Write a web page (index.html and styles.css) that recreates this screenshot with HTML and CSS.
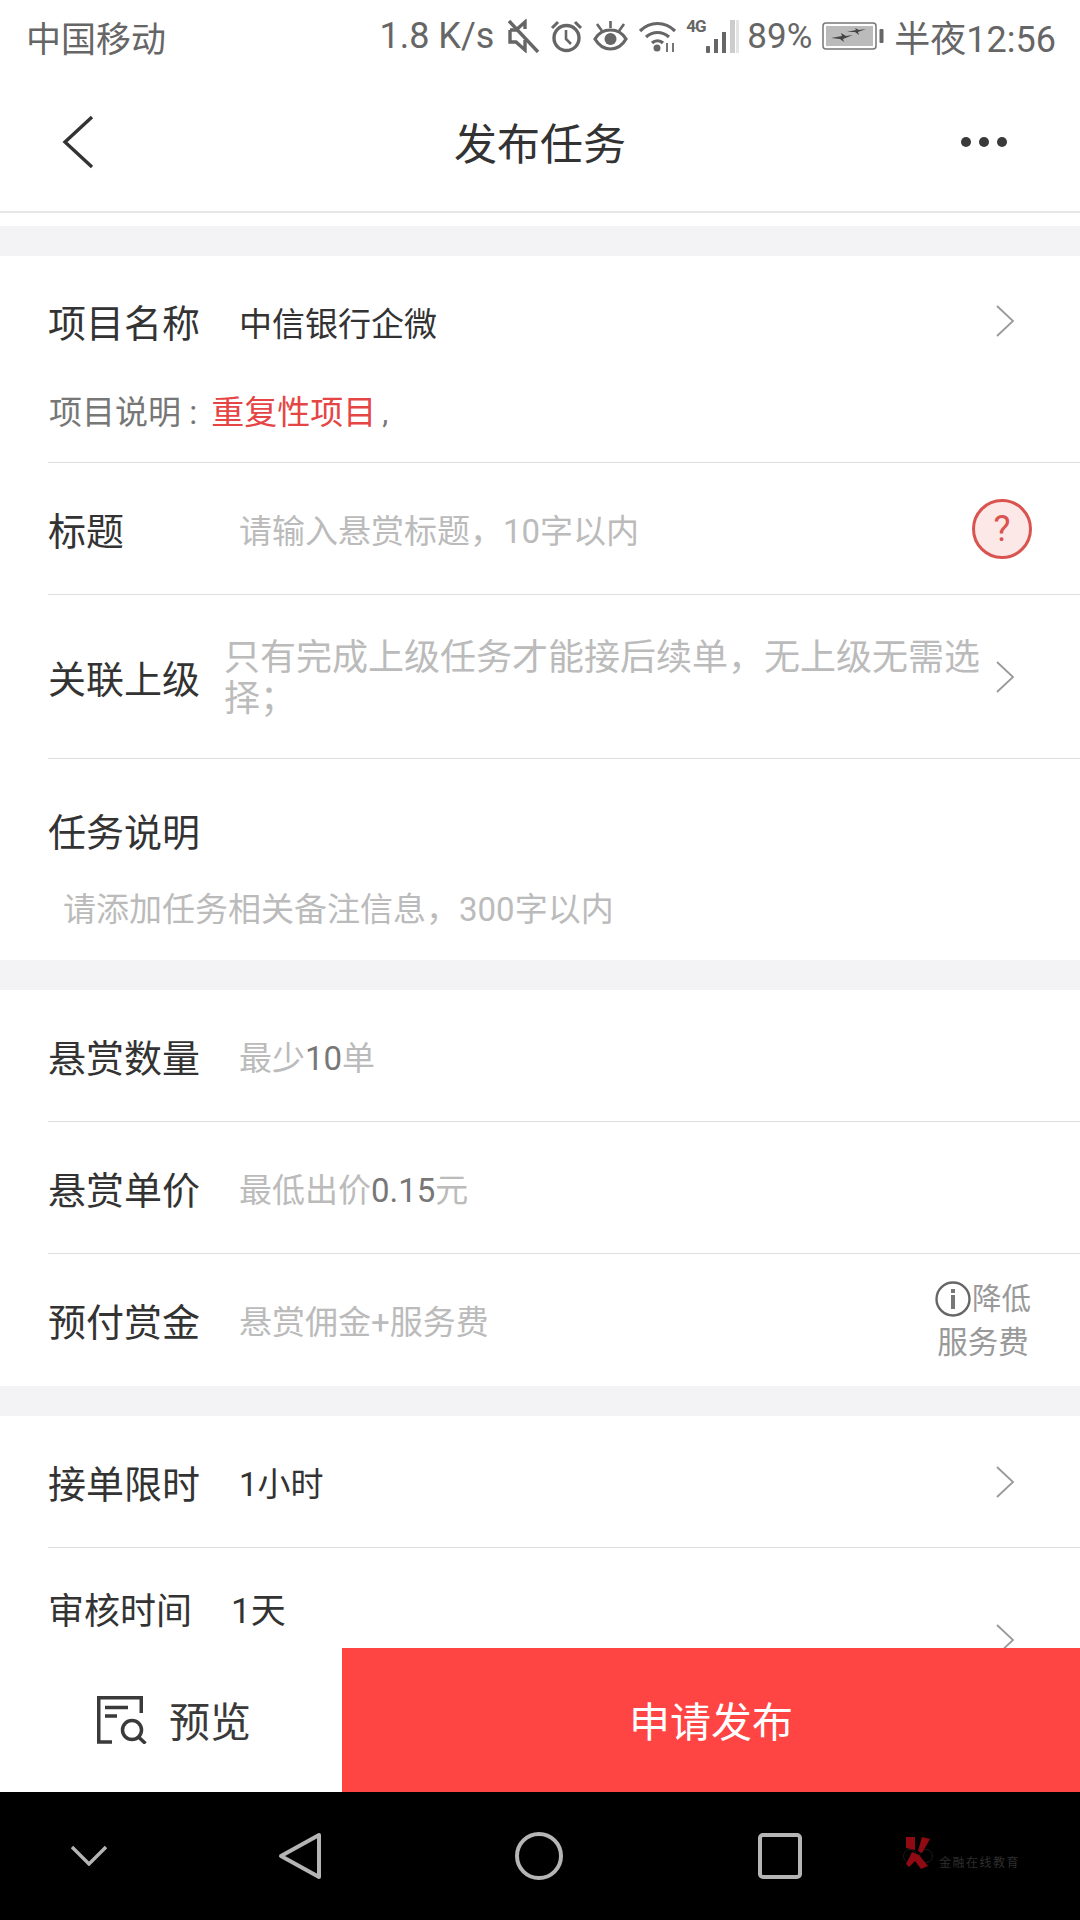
FILE: index.html
```html
<!DOCTYPE html>
<html lang="zh">
<head>
<meta charset="utf-8">
<title>发布任务</title>
<link rel="stylesheet" href="styles.css">
</head>
<body>
<div class="page">
  <div class="status">
    <span class="carrier">中国移动</span>
    <div class="status-right">
      <span class="speed">1.8 K/s</span>
      <svg class="ic-mute" viewBox="0 0 32 34"><path d="M2 11h6l9-8v7M17 21v10l-9-8H2V11" fill="none" stroke="#666" stroke-width="3.4"/><path d="M1 2l29 31" stroke="#666" stroke-width="3.4"/></svg>
      <svg class="ic-alarm" viewBox="0 0 33 33"><circle cx="16.5" cy="18" r="12.5" fill="none" stroke="#666" stroke-width="3.4"/><path d="M16 10v9l5 5" fill="none" stroke="#666" stroke-width="2.6"/><path d="M2 8l6-6M31 8l-6-6" stroke="#666" stroke-width="3"/></svg>
      <svg class="ic-eye" viewBox="0 0 35 30"><path d="M2 18c4-7 9-9 15.500-9S29 11 33 18c-4 7-9 10-15.500 10S6 25 2 18z" fill="none" stroke="#666" stroke-width="3.200"/><circle cx="17.500" cy="18" r="6" fill="#666"/><path d="M17.500 0v7M4 3l5 7M31 3l-5 7" stroke="#666" stroke-width="2.600"/></svg>
      <svg class="ic-wifi" viewBox="0 0 39 32"><path d="M2 11c10-10 25-10 35 0M8 17c7-6 16-6 23 0M14 23c3-3 8-3 11 0" fill="none" stroke="#666" stroke-width="3.200"/><circle cx="19" cy="28" r="3.500" fill="#666"/><path d="M29 23v9M35 23v9" stroke="#666" stroke-width="1.800"/></svg>
      <div class="net">
        <span class="g4">4G</span>
        <svg class="ic-signal" viewBox="0 0 34 33"><rect x="0" y="26" width="4" height="7" rx="1" fill="#666"/><rect x="8" y="19" width="4" height="14" fill="#666"/><rect x="16" y="12" width="4" height="21" fill="#666"/><rect x="24" y="0" width="5" height="33" fill="#ccc"/><rect x="30" y="0" width="3" height="33" fill="#e4e4e4"/></svg>
      </div>
      <span class="batt-pct">89%</span>
      <svg class="ic-batt" viewBox="0 0 62 28"><rect x="1" y="1" width="53" height="26" rx="3" fill="#fff" stroke="#777" stroke-width="1.500"/><rect x="4" y="4" width="47" height="20" fill="#bbb"/><path d="M9 16l11-2-1-3 5 3 7-1-10 4 1 3-4-3zM25 10l9-2-1-2 4 2 7-1-8 3 1 3-4-3z" fill="#444"/><rect x="57.500" y="7" width="4" height="14" rx="1" fill="#666"/></svg>
      <span class="clock">半夜12:56</span>
    </div>
  </div>

  <header class="header">
    <svg class="ic-back" viewBox="0 0 32 54"><path d="M30 2L3 27l27 25" fill="none" stroke="#333" stroke-width="3.400"/></svg>
    <h1 class="title">发布任务</h1>
    <div class="dots"><i></i><i></i><i></i></div>
  </header>

  <main class="content">
    <div class="band band-top"></div>
    <section class="card">
      <div class="row row-project">
        <span class="label">项目名称</span>
        <span class="value value-first">中信银行企微</span>
        <svg class="chev" viewBox="0 0 20 32"><path d="M2 1l16 15L2 31" fill="none" stroke="#999" stroke-width="1.800"/></svg>
      </div>
      <div class="desc"><span class="desc-key">项目说明 :</span><em>重复性项目</em><span class="comma">,</span></div>
      <div class="row line">
        <span class="label">标题</span>
        <span class="ph ph-title">请输入悬赏标题，10字以内</span>
        <span class="help">?</span>
      </div>
      <div class="row line row-rel">
        <span class="label">关联上级</span>
        <span class="ph-rel">只有完成上级任务才能接后续单，无上级无需选择；</span>
        <svg class="chev" viewBox="0 0 20 32"><path d="M2 1l16 15L2 31" fill="none" stroke="#999" stroke-width="1.800"/></svg>
      </div>
      <div class="note line">
        <span class="label">任务说明</span>
        <span class="ph note-ph">请添加任务相关备注信息，300字以内</span>
      </div>
    </section>

    <div class="band"></div>

    <section class="card">
      <div class="row row-first">
        <span class="label">悬赏数量</span>
        <span class="ph">最少<b>10</b>单</span>
      </div>
      <div class="row line">
        <span class="label">悬赏单价</span>
        <span class="ph">最低出价<b>0.15</b>元</span>
      </div>
      <div class="row line row-last">
        <span class="label">预付赏金</span>
        <span class="ph">悬赏佣金+服务费</span>
        <div class="reduce">
          <div class="reduce-top">
            <svg class="ic-info" viewBox="0 0 36 36"><circle cx="18" cy="18" r="16.500" fill="none" stroke="#666" stroke-width="2.400"/><rect x="16" y="14" width="4" height="14" fill="#777"/><rect x="16" y="8" width="4" height="4" fill="#777"/></svg>
            <span>降低</span>
          </div>
          <span>服务费</span>
        </div>
      </div>
    </section>

    <div class="band"></div>

    <section class="card">
      <div class="row row-first">
        <span class="label">接单限时</span>
        <span class="value">1小时</span>
        <svg class="chev" viewBox="0 0 20 32"><path d="M2 1l16 15L2 31" fill="none" stroke="#999" stroke-width="1.800"/></svg>
      </div>
      <div class="row line row-audit">
        <span class="label label-sm">审核时间</span>
        <span class="value value-audit">1天</span>
        <svg class="chev chev-audit" viewBox="0 0 20 32"><path d="M2 1l16 15L2 31" fill="none" stroke="#999" stroke-width="1.800"/></svg>
      </div>
    </section>
  </main>

  <div class="actions">
    <div class="preview">
      <svg class="ic-preview" viewBox="0 0 50 48"><path d="M15 46H1.750V1.750h42.500V17" fill="none" stroke="#3a3a3a" stroke-width="3.500"/><path d="M8 11.500h23M8 20h12" stroke="#3a3a3a" stroke-width="3.500"/><circle cx="35" cy="34" r="9.500" fill="none" stroke="#3a3a3a" stroke-width="3.500"/><path d="M41.500 41l7 6.500" stroke="#3a3a3a" stroke-width="3.500"/></svg>
      <span>预览</span>
    </div>
    <div class="publish">申请发布</div>
  </div>

  <nav class="sysnav">
    <svg class="nav-down" viewBox="0 0 38 21"><path d="M2 2l17 17L36 2" fill="none" stroke="#b5b5b5" stroke-width="3.400"/></svg>
    <svg class="nav-back" viewBox="0 0 44 48"><path d="M41 3v42L3 24z" fill="none" stroke="#b5b5b5" stroke-width="4" stroke-linejoin="round"/></svg>
    <svg class="nav-home" viewBox="0 0 48 48"><circle cx="24" cy="24" r="22" fill="none" stroke="#b5b5b5" stroke-width="4"/></svg>
    <svg class="nav-recent" viewBox="0 0 44 46"><rect x="2" y="2" width="40" height="42" rx="3" fill="none" stroke="#b5b5b5" stroke-width="4"/></svg>
    <div class="mark">
      <svg class="mark-logo" viewBox="0 0 30 32"><circle cx="7" cy="19" r="6.500" fill="none" stroke="#1c1c1c"/><circle cx="23" cy="19" r="6.500" fill="none" stroke="#1c1c1c"/><path d="M3 0h9v13l-9-2zM19 0l8 2-8 14-4-2zM9 15l7 3 9 11-7 3-6-8-6 6-3-3z" fill="#8f0a12"/></svg>
      <span class="mark-text">金融在线教育</span>
    </div>
  </nav>
</div>
</body>
</html>
```
FILE: styles.css
```css
* { box-sizing: border-box; }
html, body { margin: 0; padding: 0; }
body {
  width: 1080px;
  height: 1920px;
  overflow: hidden;
  background: #fff;
  font-family: Roboto, "Noto Sans CJK SC", sans-serif;
  color: #333;
}
.page { width: 1080px; height: 1920px; display: flex; flex-direction: column; }
svg { display: block; flex: none; }

/* status bar */
.status {
  height: 76px;
  flex: none;
  display: flex;
  align-items: center;
  justify-content: space-between;
  padding: 0 24px 4px 26px;
  color: #666;
  font-size: 36px;
  white-space: nowrap;
}
.carrier { font-size: 35px; }
.status-right { display: flex; align-items: center; gap: 10px; }
.speed { margin-right: 4px; }
.ic-mute { width: 32px; height: 34px; }
.ic-alarm { width: 33px; height: 33px; }
.ic-eye { width: 35px; height: 30px; }
.ic-wifi { width: 39px; height: 32px; }
.net { position: relative; width: 54px; height: 33px; margin-left: -1px; margin-right: -3px; }
.g4 { position: absolute; left: 0; top: -2px; font-size: 17px; font-weight: 700; letter-spacing: -1px; line-height: 16px; }
.ic-signal { position: absolute; right: 0; top: 0; width: 34px; height: 33px; }
.ic-batt { width: 62px; height: 28px; }
.batt-pct { font-size: 35px; }

/* header */
.header {
  height: 137px;
  flex: none;
  display: flex;
  align-items: center;
  justify-content: space-between;
  padding: 0 73px 4px 62px;
  border-bottom: 2px solid #e6e6e6;
  position: relative;
}
.ic-back { width: 32px; height: 54px; }
.title {
  position: absolute;
  left: 0;
  right: 0;
  top: 41px;
  margin: 0;
  text-align: center;
  font-size: 43px;
  font-weight: 400;
  line-height: 56px;
  color: #333;
}
.dots { display: flex; gap: 8px; }
.dots i { width: 10px; height: 10px; border-radius: 50%; background: #3a3a3a; }

/* content */
.content { flex: 1; min-height: 0; overflow: hidden; padding-top: 13px; }
.band { height: 30px; background: #f3f3f5; }
.card { background: #fff; }
.row {
  height: 132px;
  display: flex;
  align-items: center;
  margin-left: 48px;
  padding-right: 65px;
  position: relative;
}
.row-first { height: 131px; }
.row-last { height: 133px; }
.line { border-top: 1px solid #dedede; }
.label { width: 191px; flex: none; font-size: 38px; color: #333; line-height: 50px; white-space: nowrap; margin-top: 6px; }
.value { flex: 1; font-size: 33px; color: #333; }
.value-first { margin-top: 2px; }
.ph { flex: 1; font-size: 33px; color: #bbb; white-space: nowrap; }
.ph b { font-weight: 400; color: #777; }
.chev { width: 20px; height: 32px; }

.row-project { height: 130px; }
.desc {
  height: 76px;
  padding: 5px 0 0 49px;
  font-size: 33px;
  color: #777;
  line-height: 44px;
  display: flex;
}
.desc-key { margin-right: 14px; }
.desc em { font-style: normal; color: #e64545; }
.comma { margin-left: 6px; font-size: 30px; }

.help {
  width: 60px;
  height: 60px;
  flex: none;
  margin-right: -17px;
  border-radius: 50%;
  border: 3px solid #d9534f;
  background: #fde8e8;
  color: #d9534f;
  font-size: 36px;
  line-height: 54px;
  text-align: center;
}

.row-rel { height: 164px; }
.row-rel .label { width: 176px; }
.ph-rel {
  flex: 1;
  font-size: 36px;
  line-height: 41px;
  color: #bbb;
  margin: 5px 14px 0 0;
  height: 82px;
}

.note { height: 202px; margin-left: 48px; display: flex; flex-direction: column; padding-top: 48px; }
.note .label { margin-top: 1px; }
.note-ph { flex: none; margin: 29px 0 0 15px; line-height: 46px; }

.reduce {
  width: 106px;
  margin-right: -21px;
  flex: none;
  display: flex;
  flex-direction: column;
  align-items: center;
  font-size: 30.500px;
  color: #999;
  line-height: 44px;
}
.reduce-top { display: flex; align-items: center; gap: 1px; font-size: 29.500px; margin-top: 1px; }
.ic-info { width: 36px; height: 36px; }

.row-audit { align-items: flex-start; height: 132px; padding-top: 39px; }
.label-sm { width: 183px; font-size: 36px; margin-top: 0; }
.value-audit { font-size: 35px; line-height: 50px; }
.chev-audit { margin-top: 37px; }

/* bottom actions */
.actions { height: 144px; flex: none; display: flex; background: #fff; }
.preview {
  width: 342px;
  display: flex;
  align-items: center;
  padding-left: 97px;
  gap: 22px;
  font-size: 41px;
  color: #3a3a3a;
}
.preview span { margin-top: -2px; }
.ic-preview { width: 50px; height: 48px; }
.publish {
  flex: 1;
  background: #ff4444;
  color: #fff;
  font-size: 41px;
  padding-bottom: 2px;
  display: flex;
  align-items: center;
  justify-content: center;
}

/* system nav */
.sysnav { height: 128px; flex: none; background: #000; display: flex; align-items: center; padding: 0 0 0 70px; }
.nav-down { width: 38px; height: 21px; margin-right: 170px; margin-top: -2px; }
.nav-back { width: 44px; height: 48px; margin-right: 193px; }
.nav-home { width: 48px; height: 48px; margin-right: 195px; }
.nav-recent { width: 44px; height: 46px; margin-right: 101px; }
.mark { display: flex; align-items: flex-end; gap: 6px; margin-top: -6px; }
.mark-logo { width: 30px; height: 32px; }
.mark-text { font-size: 12px; letter-spacing: 1.500px; color: #2e2e2e; line-height: 12px; white-space: nowrap; }
```
